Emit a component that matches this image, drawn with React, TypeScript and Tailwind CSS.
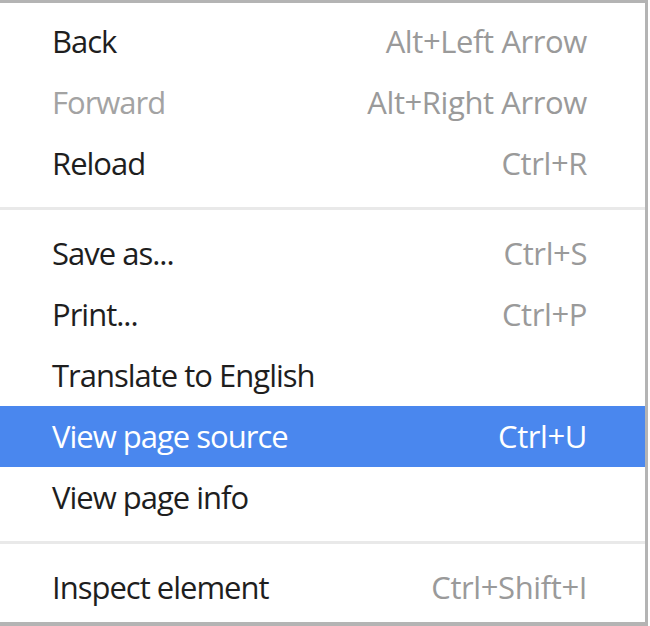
const groups = [
  [
    { label: 'Back', shortcut: 'Alt+Left Arrow' },
    { label: 'Forward', shortcut: 'Alt+Right Arrow', disabled: true },
    { label: 'Reload', shortcut: 'Ctrl+R' },
  ],
  [
    { label: 'Save as...', shortcut: 'Ctrl+S' },
    { label: 'Print...', shortcut: 'Ctrl+P' },
    { label: 'Translate to English' },
    { label: 'View page source', shortcut: 'Ctrl+U', active: true },
    { label: 'View page info' },
  ],
  [{ label: 'Inspect element', shortcut: 'Ctrl+Shift+I' }],
]

export default function App() {
  return (
    <div className="h-[626px] w-[650px] bg-white">
      <div
        className="flex h-[626px] w-[648px] flex-col border-t-[3px] border-r-[3px] border-b-[4px] border-[#b4b4b4] bg-white pt-[8px] text-[31px] tracking-[-1px] text-[#1e1e1e]"
        style={{ fontFamily: '"Open Sans", "Noto Sans", sans-serif' }}
      >
        {groups.map((items, i) => (
          <div key={i}>
            {i > 0 && <div className="my-[13px] h-[3px] bg-[#e9e9e9]" />}
            {items.map((item) => (
              <div
                key={item.label}
                className={
                  'flex h-[61px] items-center justify-between pr-[58px] pl-[52px] ' +
                  (item.active ? 'bg-[#4a87ee] text-white' : '')
                }
              >
                <span className={item.disabled ? 'text-[#a3a3a3]' : ''}>
                  {item.label}
                </span>
                {item.shortcut && (
                  <span
                    className={
                      'tracking-[-0.4px] ' +
                      (item.active ? 'text-white' : 'text-[#9a9a9a]')
                    }
                  >
                    {item.shortcut}
                  </span>
                )}
              </div>
            ))}
          </div>
        ))}
      </div>
    </div>
  )
}
